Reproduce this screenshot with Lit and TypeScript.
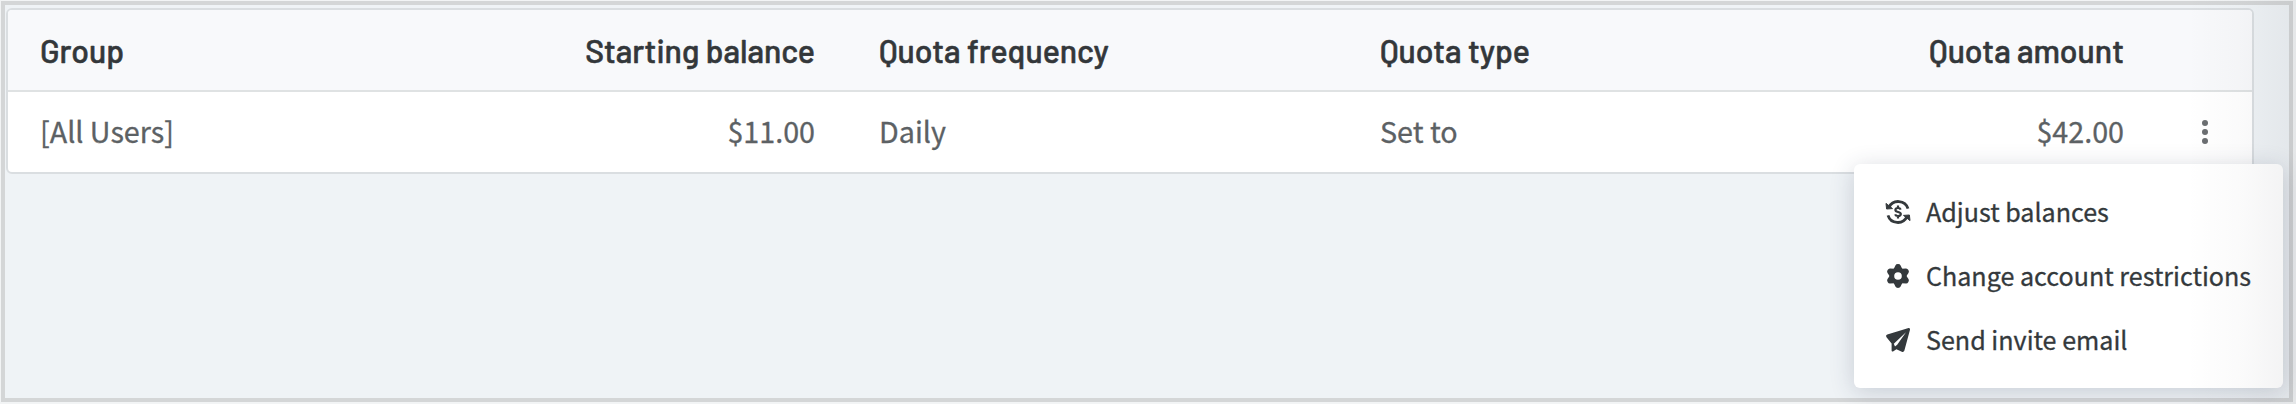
import { LitElement, html, css, svg } from "lit";

const icons = {
  balance: svg`
    <g fill="none" stroke="currentColor" stroke-width="2.8">
      <path d="M3 7.300A10.200 10 0 0 1 22 8.600"/>
      <path d="M21 16.700A10.200 10 0 0 1 2 15.400"/>
      <path stroke-width="2.200" d="M14.700 9.600C14.300 8.500 13.200 8 12 8c-1.500 0-2.600.7-2.600 1.900 0 2.700 5.400 1.400 5.400 4.100 0 1.300-1.200 2-2.800 2-1.400 0-2.500-.5-2.900-1.700M12 5.600v2.400M12 16V18.400"/>
    </g>
    <path d="M0 3.400 6.500 8.600 0.600 9ZM24 20.600 17.500 15.400 23.400 15Z" fill="currentColor" stroke="currentColor" stroke-linejoin="round"/>`,
  gear: svg`
    <g fill="currentColor">
      <path fill-rule="evenodd" d="M12 3.600a8.400 8.400 0 1 0 0 16.800a8.400 8.400 0 1 0 0-16.800ZM12 8.200a3.800 3.800 0 1 1 0 7.600a3.800 3.800 0 1 1 0-7.600Z"/>
      ${[0, 60, 120, 180, 240, 300].map(
        (a) => svg`<path transform=${`rotate(${a} 12 12)`} d="M7.600 5.200 9.400 1.400Q10 0 12 0T14.600 1.400L16.400 5.200Z"/>`
      )}
    </g>`,
  send: svg`
    <path fill="currentColor" fill-rule="evenodd" d="M22.600.1C23.600-.1 24.200.7 24 1.700L18.400 22.500C18 23.800 16.900 24.200 15.800 23.700L10.400 21.300 7.400 23.300C6.600 23.900 5.600 23.500 5.600 22.500V15.600L.500 9.200C-.300 8 .1 6.900 1.300 6.500ZM20 4.300 7.800 15.800 9 18.600 11.200 16.800Z"/>`,
};

const columns = [
  { title: "Group", value: "[All Users]", end: false },
  { title: "Starting balance", value: "$11.00", end: true },
  { title: "Quota frequency", value: "Daily", end: false },
  { title: "Quota type", value: "Set to", end: false },
  { title: "Quota amount", value: "$42.00", end: true },
];

const actions = [
  { icon: icons.balance, label: "Adjust balances" },
  { icon: icons.gear, label: "Change account restrictions" },
  { icon: icons.send, label: "Send invite email" },
];

class AppRoot extends LitElement {
  static styles = css`
    :host {
      display: block;
      position: relative;
      box-sizing: border-box;
      width: 2296px;
      height: 404px;
      padding: 1px 3px 2px 1px;
      overflow: hidden;
      background: #f2f4f5;
      font-family: "Noto Sans CJK SC", "Noto Sans", sans-serif;
    }
    .frame {
      box-sizing: border-box;
      height: 401px;
      padding: 3px 35px 0 1px;
      border: 4px solid #d4d6d7;
      background: #eff3f6;
    }
    .table {
      box-sizing: border-box;
      height: 166px;
      border: 2px solid #dadee1;
      border-radius: 6px;
      background: #fff;
      overflow: hidden;
    }
    .row {
      display: grid;
      grid-template-columns: 439px 400px 502px 407px 400px 96px;
      height: 80px;
      align-items: center;
    }
    .head {
      background: #f8f9fb;
      border-bottom: 2px solid #dfe2e3;
      color: #33373a;
      font: 500 32px/38px Barlow, Roboto, sans-serif;
      -webkit-text-stroke: 0.6px #33373a;
    }
    .body {
      color: #5c6164;
      font-size: 28.7px;
      line-height: 40px;
      -webkit-text-stroke: 0.3px #5c6164;
    }
    .cell {
      padding: 0 32px;
      white-space: nowrap;
    }
    .cell:nth-child(4) {
      padding-left: 31px;
    }
    .body .cell {
      padding-bottom: 3px;
    }
    .end {
      text-align: right;
    }
    .more {
      display: flex;
      flex-direction: column;
      align-items: center;
      gap: 3px;
      padding-left: 2px;
    }
    .dot {
      width: 6px;
      height: 6px;
      border-radius: 50%;
      background: #6b6e71;
    }
    .menu {
      position: absolute;
      left: 1854px;
      top: 164px;
      box-sizing: border-box;
      width: 429px;
      height: 224px;
      padding: 16px 32px;
      border-radius: 6px;
      background: #fff;
      box-shadow: 0 4px 24px rgba(40, 50, 80, 0.2);
      color: #34393c;
      font-size: 25.1px;
      -webkit-text-stroke: 0.3px #34393c;
    }
    .item {
      display: flex;
      align-items: center;
      gap: 16px;
      height: 64px;
      white-space: nowrap;
    }
    .label {
      line-height: 36px;
      padding-bottom: 3px;
    }
    svg {
      width: 24px;
      height: 24px;
      flex: none;
      overflow: visible;
    }
    .shade {
      position: absolute;
      top: 0;
      right: 0;
      width: 110px;
      height: 100%;
      background: linear-gradient(to right, rgba(30, 30, 40, 0), rgba(30, 30, 40, 0.02) 50%, rgba(30, 30, 40, 0.06));
      pointer-events: none;
    }
  `;

  render() {
    return html`
      <div class="frame">
        <div class="table">
          <div class="row head">
            ${columns.map((c) => html`<div class="cell ${c.end ? "end" : ""}">${c.title}</div>`)}
          </div>
          <div class="row body">
            ${columns.map((c) => html`<div class="cell ${c.end ? "end" : ""}">${c.value}</div>`)}
            <div class="more"><i class="dot"></i><i class="dot"></i><i class="dot"></i></div>
          </div>
        </div>
      </div>
      <div class="menu">
        ${actions.map(
          (a) => html`<div class="item"><svg viewBox="0 0 24 24">${a.icon}</svg><span class="label">${a.label}</span></div>`
        )}
      </div>
      <div class="shade"></div>
    `;
  }
}
customElements.define("app-root", AppRoot);
